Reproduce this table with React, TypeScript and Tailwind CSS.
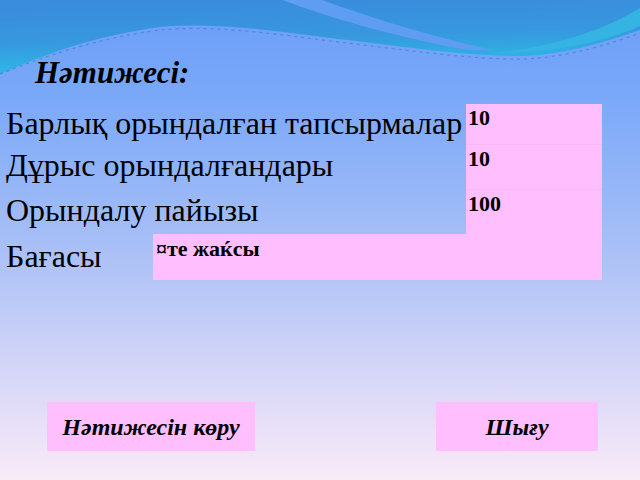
export default function App() {
  const rows = [
    { label: 'Барлық орындалған тапсырмалар', value: '10', h: 'h-[40px]' },
    { label: 'Дұрыс орындалғандары', value: '10', h: 'h-[45px]' },
    { label: 'Орындалу пайызы', value: '100', h: 'h-[45px]' },
  ];

  return (
    <div className="relative w-full h-[480px] overflow-hidden bg-[linear-gradient(180deg,#6a9df7_0%,#7aa8f9_20%,#a6bef6_50%,#d6d6f7_78%,#f9ebf8_100%)] font-['Liberation_Serif',serif] text-black">
      {/* top wave decoration */}
      <svg className="absolute top-0 left-0 w-[640px] h-[100px]" viewBox="0 0 640 100">
        <defs>
          <linearGradient id="band" x1="0" y1="0" x2="0.2" y2="1">
            <stop offset="0" stopColor="#3a8bdc" />
            <stop offset="0.55" stopColor="#3797de" />
            <stop offset="1" stopColor="#2cbbe6" />
          </linearGradient>
        </defs>
        <path d="M0,0 H640 V30 C600,44 565,54 525,56 C470,57 400,46 330,38 C270,30 210,22 160,27 C100,35 50,52 0,74 Z" fill="url(#band)" />
        <path d="M282,0 C330,18 395,36 450,47 C465,50 478,51 492,50 C430,36 365,16 322,0 Z" fill="#5f9df2" />
        <path d="M640,8 C605,30 548,49 490,53 C550,54 605,42 640,26 Z" fill="#35b4e4" />
        <path d="M0,74 C50,54 100,38 160,30 C210,25 270,33 330,41 C400,49 470,60 525,59 C565,57 605,46 640,33" fill="none" stroke="#3d7fd0" strokeWidth="1.2" strokeDasharray="3 4" opacity="0.7" />
      </svg>

      <div className="relative">
        <h1 className="pt-[54px] pl-[35px] h-[92px] text-[31px] leading-[37px] font-bold italic">Нәтижесі:</h1>

        <div className="mt-[12px] ml-[6px] grid grid-cols-[147px_313px_136px]">
          {rows.map((r, i) => (
            <div key={i} className="contents">
              <div className={`col-span-2 ${r.h} flex items-center pb-[3px] text-[32px] leading-[36px] whitespace-nowrap`}>{r.label}</div>
              <div className={`${r.h} bg-[#ffbfff] pl-[2px] pt-[1px] text-[22px] leading-[25px] font-bold ${i > 0 ? 'border-t border-[#f7b9f7]' : ''}`}>
                {r.value}
              </div>
            </div>
          ))}
          <div className="h-[46px] flex items-center pb-[2px] text-[32px] leading-[36px]">Бағасы</div>
          <div className="col-span-2 h-[46px] bg-[#ffbfff] pl-[3px] pt-[2px] text-[22px] leading-[25px] font-bold">¤те жаќсы</div>
        </div>

        <div className="mt-[122px] flex justify-between pl-[47px] pr-[42px]">
          <button className="w-[208px] h-[49px] bg-[#ffbfff] flex items-center justify-center text-[24px] font-bold italic">
            Нәтижесін көру
          </button>
          <button className="w-[162px] h-[49px] bg-[#ffbfff] flex items-center justify-center text-[24px] font-bold italic">
            Шығу
          </button>
        </div>
      </div>
    </div>
  );
}
